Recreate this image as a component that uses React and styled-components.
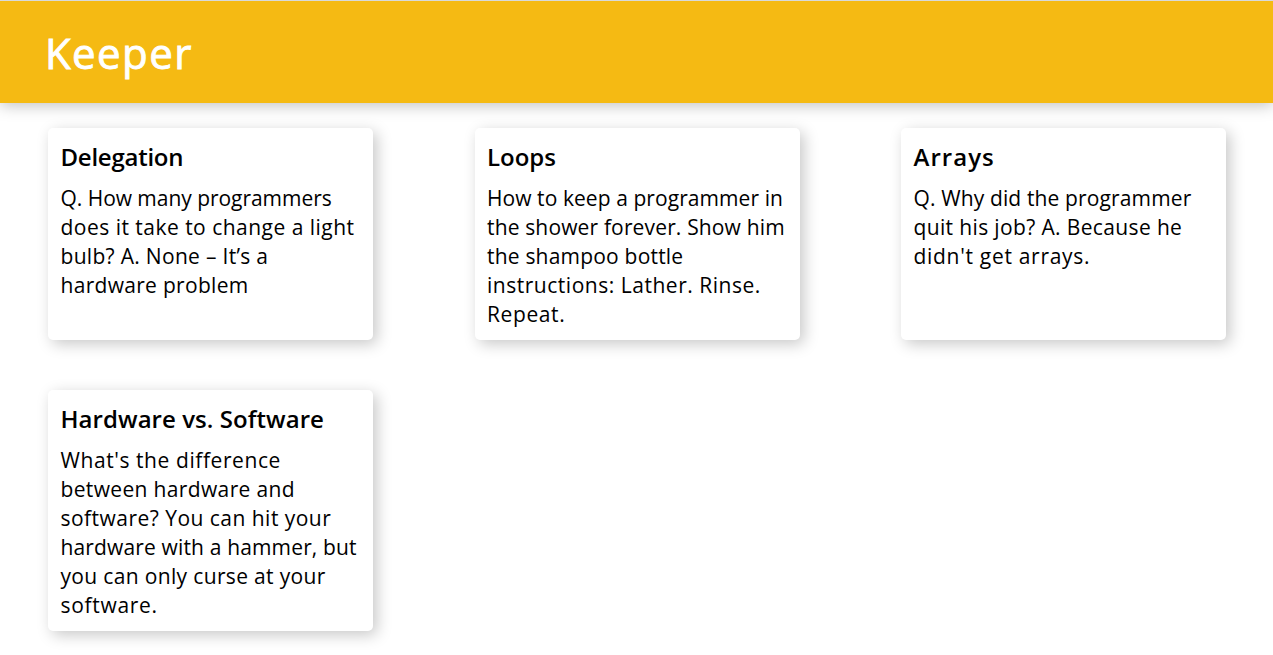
import React from "react";
import styled, { createGlobalStyle } from "styled-components";

const GlobalStyle = createGlobalStyle`
  * { box-sizing: border-box; margin: 0; padding: 0; }
  body { background: #fff; font-family: "Open Sans", "Noto Sans", sans-serif; color: #000; }
`;

const Header = styled.header`
  height: 103px;
  padding: 24px 45px 0;
  background: #f5ba13;
  border-top: 1px solid #d8dad9;
  box-shadow: 0 2px 15px rgba(0, 0, 0, 0.26);
`;

const Brand = styled.h1`
  color: #fff;
  font-size: 42px;
  font-weight: 400;
  line-height: 56px;
  letter-spacing: 1.4px;
  -webkit-text-stroke: 0.9px #fff;
`;

const Board = styled.main`
  display: grid;
  grid-template-columns: repeat(3, 325px);
  justify-content: space-between;
  align-items: stretch;
  row-gap: 50px;
  padding: 25px 47px 24px 48px;
`;

const Note = styled.article`
  padding: 12px 0 11px 12.5px;
  border-radius: 5px;
  background: #fff;
  box-shadow: 4px 4px 15px rgba(0, 0, 0, 0.22);
`;

const NoteTitle = styled.h2`
  margin-bottom: 10px;
  font-size: 24px;
  font-weight: 600;
  line-height: 34px;
  letter-spacing: ${(p) => p.$spacing}px;
`;

const NoteText = styled.p`
  font-size: 21px;
  line-height: 29px;
`;

const Line = styled.span`
  display: block;
  white-space: nowrap;
  letter-spacing: ${(p) => p.$spacing}px;
`;

const notes = [
  {
    title: ["Delegation", -0.25],
    lines: [
      ["Q. How many programmers", -0.04],
      ["does it take to change a light", 0.48],
      ["bulb? A. None – It’s a", 0.3],
      ["hardware problem", 0.3],
    ],
  },
  {
    title: ["Loops", 0],
    lines: [
      ["How to keep a programmer in", 0.07],
      ["the shower forever. Show him", 0.15],
      ["the shampoo bottle", 0.2],
      ["instructions: Lather. Rinse.", 0.52],
      ["Repeat.", 0.6],
    ],
  },
  {
    title: ["Arrays", 1.05],
    lines: [
      ["Q. Why did the programmer", 0.13],
      ["quit his job? A. Because he", 0.36],
      ["didn't get arrays.", 0.7],
    ],
  },
  {
    title: ["Hardware vs. Software", 0.06],
    lines: [
      ["What's the difference", 0.58],
      ["between hardware and", 0.35],
      ["software? You can hit your", 0.47],
      ["hardware with a hammer, but", 0.15],
      ["you can only curse at your", 0.34],
      ["software.", 0.7],
    ],
  },
];

export default function App() {
  return (
    <>
      <GlobalStyle />
      <Header>
        <Brand>Keeper</Brand>
      </Header>
      <Board>
        {notes.map(({ title, lines }) => (
          <Note key={title[0]}>
            <NoteTitle $spacing={title[1]}>{title[0]}</NoteTitle>
            <NoteText>
              {lines.map(([text, spacing]) => (
                <Line key={text} $spacing={spacing}>{text} </Line>
              ))}
            </NoteText>
          </Note>
        ))}
      </Board>
    </>
  );
}
